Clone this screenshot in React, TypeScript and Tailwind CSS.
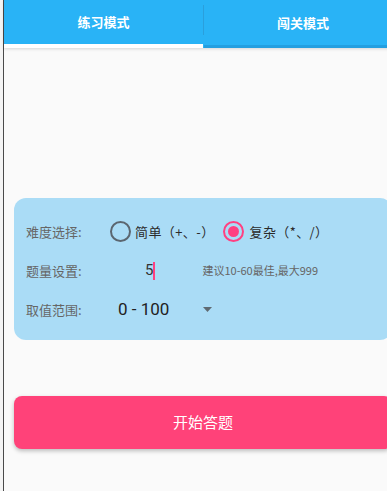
import React from "react";

const font = { fontFamily: '"Noto Sans CJK SC", "Noto Sans", sans-serif' };

export default function App() {
  return (
    <div
      className="w-[387px] h-[491px] overflow-hidden bg-[#fafafa] flex"
      style={font}
    >
      {/* left edge */}
      <div className="w-[3px] shrink-0 bg-[#f4f4f4]" />
      <div className="w-px shrink-0 bg-[#4a4a4a]" />

      <div className="w-[398px] shrink-0 flex flex-col">
        {/* Tabs */}
        <div className="h-[48px] bg-[#29b3f6] flex shadow-[0_1px_3px_rgba(0,0,0,0.15)] relative">
          <div className="w-[199px] flex flex-col">
            <div className="flex-1 flex items-center justify-center text-white text-[13px] font-bold">
              练习模式
            </div>
            <div className="h-[4px] bg-white" />
          </div>
          <div className="w-px self-start mt-[5px] h-[30px] bg-[#2a9fdc]" />
          <div className="flex-1 flex flex-col">
            <div className="flex-1 flex items-center justify-center text-white text-[13px] font-bold">
              闯关模式
            </div>
            <div className="h-[3px] bg-[#239fe0]" />
          </div>
        </div>

        {/* Settings card */}
        <div className="mx-[10px] mt-[150px] h-[142px] rounded-[12px] bg-[#aadcf6] pl-[12px] pt-[14px]">
          <div className="h-[39px] flex items-center">
            <div className="w-[84px] text-[13px] text-[#666]">难度选择:</div>
            <div className="w-[21px] h-[21px] rounded-full border-2 border-[#5b6670]" />
            <div className="ml-[4px] text-[13px] text-[#2a2a2a] tracking-[0.4px]">简单（+、-）</div>
            <div className="ml-[8px] w-[21px] h-[21px] rounded-full border-2 border-[#ff4081] flex items-center justify-center">
              <div className="w-[11px] h-[11px] rounded-full bg-[#ff4081]" />
            </div>
            <div className="ml-[6px] text-[13px] text-[#2a2a2a] tracking-[0.4px]">复杂（*、/）</div>
          </div>
          <div className="h-[39px] flex items-center">
            <div className="w-[84px] text-[13px] text-[#666]">题量设置:</div>
            <div className="ml-[35px] flex items-center">
              <span className="text-[15px] text-[#333]" style={{ fontFamily: "Roboto, sans-serif" }}>
                5
              </span>
              <span className="w-[2px] h-[18px] bg-[#ff4081]" />
            </div>
            <div className="ml-[47px] text-[11px] text-[#666]">建议10-60最佳,最大999</div>
          </div>
          <div className="h-[39px] flex items-center">
            <div className="w-[84px] text-[13px] text-[#666]">取值范围:</div>
            <div
              className="ml-[8px] text-[17px] text-[#222]"
              style={{ fontFamily: "Roboto, sans-serif" }}
            >
              0 - 100
            </div>
            <svg className="ml-[34px]" width="9" height="5" viewBox="0 0 9 5">
              <path d="M0 0 L9 0 L4.5 5 Z" fill="#5f6a72" />
            </svg>
          </div>
        </div>

        {/* Start button */}
        <button className="mx-[10px] mt-[56px] h-[53px] rounded-[8px] bg-[#ff4279] text-white text-[15px] shadow-[0_2px_4px_rgba(0,0,0,0.25)]">
          开始答题
        </button>
      </div>
    </div>
  );
}
